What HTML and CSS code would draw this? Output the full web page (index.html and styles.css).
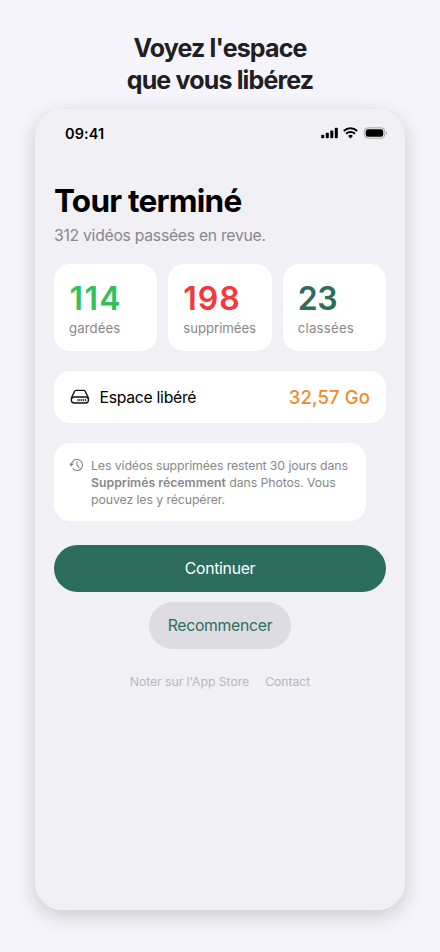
FILE: index.html
```
<!DOCTYPE html>
<html lang="fr">
<head>
<meta charset="utf-8">
<title>Tour terminé</title>
<link rel="stylesheet" href="styles.css">
</head>
<body>
<h1 class="headline">Voyez l'espace<br>que vous libérez</h1>
<main class="phone">
  <div class="status">
    <span class="time">09:41</span>
    <svg class="status-icons" width="68" height="14" viewBox="0 0 68 14">
      <g fill="#000">
        <rect x="1.2" y="8.7" width="3" height="3.5" rx=".8"/>
        <rect x="5.8" y="6.8" width="3" height="5.4" rx=".8"/>
        <rect x="10.3" y="4.4" width="3" height="7.8" rx=".8"/>
        <rect x="14.8" y="1.8" width="3" height="10.4" rx=".8"/>
        <path d="M30.5 12.4 28.1 10a3.5 3.5 0 0 1 4.8 0z"/>
      </g>
      <path d="M23.8 5a9.8 9.8 0 0 1 13.4 0M26.1 7.7a6.4 6.4 0 0 1 8.8 0" fill="none" stroke="#000" stroke-width="2"/>
      <rect x="44.2" y="1.8" width="20.6" height="10.4" rx="3.6" fill="none" stroke="#a9a9ab"/>
      <rect x="45.7" y="3.3" width="17.6" height="7.4" rx="2.3"/>
      <path d="M66 5.3v3.4a1.8 1.8 0 0 0 0-3.4z" fill="#a9a9ab"/>
    </svg>
  </div>
  <h2 class="title">Tour terminé</h2>
  <p class="subtitle">312 vidéos passées en revue.</p>
  <section class="stats">
    <div class="card stat green"><strong>114</strong><span>gardées</span></div>
    <div class="card stat red"><strong>198</strong><span>supprimées</span></div>
    <div class="card stat teal"><strong>23</strong><span>classées</span></div>
  </section>
  <section class="card space">
    <svg width="20" height="16" viewBox="0 0 20 16" fill="none" stroke="#111" stroke-width="1.35" stroke-linejoin="round">
      <path d="M4.4 2.6Q4.8 1.4 6 1.4h7.8q1.2 0 1.6 1.2l3 6.4v2.2a2.8 2.8 0 0 1-2.8 2.8H4.2a2.8 2.8 0 0 1-2.8-2.8V9z"/>
      <path d="M1.6 9.6Q2.4 8 4.2 8h11.4q1.8 0 2.6 1.6"/>
      <path d="M8 10v2.2M9.9 10v2.2M11.8 10v2.2M13.7 10v2.2M15.6 10v2.2" stroke-width="1"/>
    </svg>
    <span class="label">Espace libéré</span>
    <span class="amount">32,57 Go</span>
  </section>
  <section class="card note">
    <svg width="15" height="14" viewBox="0 0 15 14" fill="none" stroke="#858587" stroke-width="1.05" stroke-linecap="round" stroke-linejoin="round">
      <path d="M2.4 6.4A5.6 5.6 0 1 1 3.8 10.7"/>
      <path d="M8 3.4v3.8l2 2.4"/>
      <path d="M.6 6 2.4 8.2 4.2 6z" fill="#858587" stroke-width=".5"/>
    </svg>
    <p>Les vidéos supprimées restent 30 jours dans<br><b>Supprimés récemment</b> dans Photos. Vous<br>pouvez les y récupérer.</p>
  </section>
  <button class="primary">Continuer</button>
  <button class="secondary">Recommencer</button>
  <footer><span>Noter sur l'App Store</span><span>Contact</span></footer>
</main>
</body>
</html>
```
FILE: styles.css
```
* { box-sizing: border-box; }
body {
  margin: 0;
  height: 952px;
  padding: 32px 35px 0;
  background: #f5f4fa;
  font-family: Inter, "Liberation Sans", sans-serif;
  white-space: nowrap;
  overflow: hidden;
}
h1, h2, p { margin: 0; }
.headline {
  height: 77px;
  font-size: 25px;
  line-height: 32px;
  font-weight: 700;
  letter-spacing: -0.84px;
  text-align: center;
  color: #202024;
}
.phone {
  display: flex;
  flex-direction: column;
  height: 801px;
  padding: 0 19px;
  border-radius: 27px;
  background: #f1f0f5;
  box-shadow: 0 6px 20px rgba(0, 0, 0, 0.17);
}
.status {
  display: flex;
  justify-content: space-between;
  align-items: center;
  height: 48px;
  padding-left: 11px;
}
.status-icons { margin-right: -2px; }
.time { font-size: 14.5px; font-weight: 600; letter-spacing: 0.1px; }
.title {
  margin-top: 24px;
  font-size: 31.5px;
  line-height: 40px;
  font-weight: 700;
  letter-spacing: -0.75px;
  color: #000;
}
.subtitle {
  margin-top: 4px;
  font-size: 15.75px;
  line-height: 22px;
  letter-spacing: -0.28px;
  color: #88888c;
}
.stats {
  display: grid;
  grid-template-columns: repeat(3, 1fr);
  gap: 11px;
  margin-top: 17px;
}
.card { background: #fff; border-radius: 16px; }
.stat {
  display: flex;
  flex-direction: column;
  height: 87px;
  padding: 16px 15px 0;
}
.stat strong {
  font-size: 32px;
  line-height: 38px;
  font-weight: 600;
}
.stat span { font-size: 13.2px; line-height: 20px; letter-spacing: 0.1px; color: #88888a; }
.green strong { padding-left: 0.5px; letter-spacing: 1.4px; color: #34c15c; }
.red strong { letter-spacing: 1px; color: #f5383e; }
.teal strong { letter-spacing: -0.4px; color: #2c6d60; }
.red span { letter-spacing: -0.05px; }
.teal span { letter-spacing: 0.25px; }
.space {
  display: flex;
  align-items: center;
  height: 52.5px;
  margin-top: 19.5px;
  padding: 0 16px;
  font-size: 15.75px;
}
.label { margin-left: 9.5px; padding-top: 1.5px; letter-spacing: -0.28px; color: #000; }
.amount { margin-left: auto; font-size: 18.5px; font-weight: 500; letter-spacing: 0.1px; color: #f08c28; }
.note {
  display: flex;
  gap: 8px;
  width: 312px;
  height: 78.5px;
  margin-top: 19.5px;
  padding: 14px 14px 0;
  font-size: 12.3px;
  line-height: 17px;
  letter-spacing: -0.09px;
  color: #88888a;
}
.note svg { margin-top: 1px; margin-left: 1px; margin-right: -1px; flex: none; }
.note b { font-weight: 600; letter-spacing: 0; }
button { border: 0; padding: 0; border-radius: 24px; font: 400 15.75px Inter, sans-serif; letter-spacing: -0.28px; }
.primary { height: 47.5px; margin-top: 23.5px; background: #2c6d60; color: #fff; }
.secondary { align-self: center; width: 142px; height: 47px; margin-top: 10px; background: #dddce2; color: #2c6d60; }
footer {
  display: flex;
  justify-content: center;
  gap: 16px;
  margin-top: 23.5px;
  font-size: 12.3px;
  line-height: 18px;
  letter-spacing: -0.08px;
  color: #b8b8bd;
}
```
